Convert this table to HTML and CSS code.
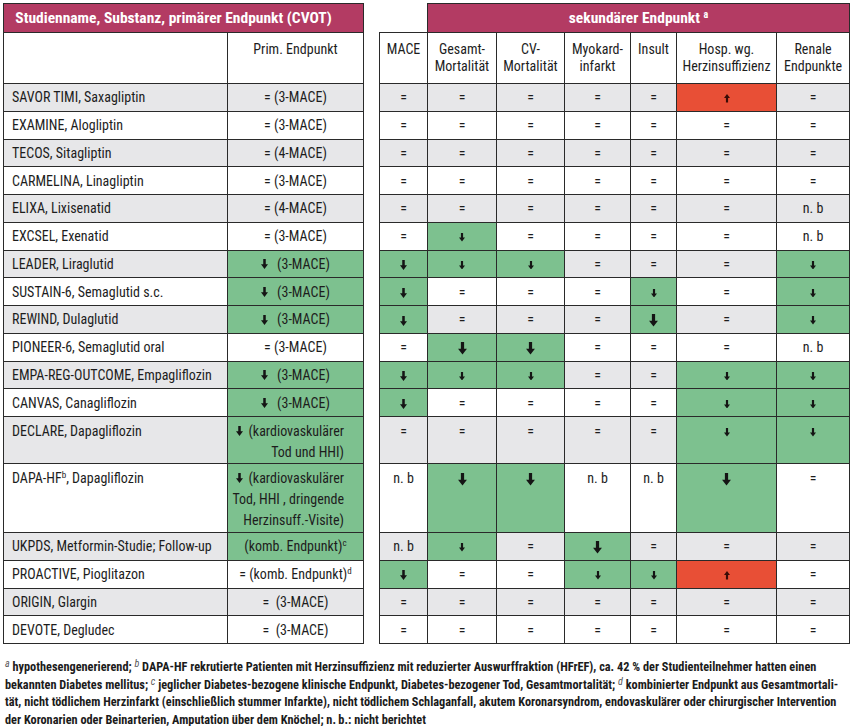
FILE: index.html
```html
<!DOCTYPE html>
<html lang="de">
<head>
<meta charset="utf-8">
<link rel="stylesheet" href="styles.css">
</head>
<body>
<div class="page">
<div class="tables">
<table class="tbl left">
<colgroup><col class="c-name"><col class="c-prim"></colgroup>
<tr class="h1"><th colspan="2" class="mag mag-l">Studienname, Substanz, primärer Endpunkt (CVOT)</th></tr>
<tr class="h2"><th class="hd"></th><th class="hd">Prim. Endpunkt</th></tr>
<tr class="r g"><td class="name">SAVOR TIMI, Saxagliptin</td><td>= (3-MACE)</td></tr>
<tr class="r"><td class="name">EXAMINE, Alogliptin</td><td>= (3-MACE)</td></tr>
<tr class="r g"><td class="name">TECOS, Sitagliptin</td><td>= (4-MACE)</td></tr>
<tr class="r"><td class="name">CARMELINA, Linagliptin</td><td>= (3-MACE)</td></tr>
<tr class="r g"><td class="name">ELIXA, Lixisenatid</td><td>= (4-MACE)</td></tr>
<tr class="r"><td class="name">EXCSEL, Exenatid</td><td>= (3-MACE)</td></tr>
<tr class="r g"><td class="name">LEADER, Liraglutid</td><td class="gr"><svg class="ar m pa" viewBox="0 0 10 14"><path d="M3.2 0h3.6v7.5H10L5 14 0 7.5h3.2z"/></svg>(3-MACE)</td></tr>
<tr class="r"><td class="name">SUSTAIN-6, Semaglutid s.c.</td><td class="gr"><svg class="ar m pa" viewBox="0 0 10 14"><path d="M3.2 0h3.6v7.5H10L5 14 0 7.5h3.2z"/></svg>(3-MACE)</td></tr>
<tr class="r g"><td class="name">REWIND, Dulaglutid</td><td class="gr"><svg class="ar m pa" viewBox="0 0 10 14"><path d="M3.2 0h3.6v7.5H10L5 14 0 7.5h3.2z"/></svg>(3-MACE)</td></tr>
<tr class="r"><td class="name">PIONEER-6, Semaglutid oral</td><td>= (3-MACE)</td></tr>
<tr class="r g"><td class="name">EMPA-REG-OUTCOME, Empagliflozin</td><td class="gr"><svg class="ar m pa" viewBox="0 0 10 14"><path d="M3.2 0h3.6v7.5H10L5 14 0 7.5h3.2z"/></svg>(3-MACE)</td></tr>
<tr class="r"><td class="name">CANVAS, Canagliflozin</td><td class="gr"><svg class="ar m pa" viewBox="0 0 10 14"><path d="M3.2 0h3.6v7.5H10L5 14 0 7.5h3.2z"/></svg>(3-MACE)</td></tr>
<tr class="r2 g tall"><td class="name">DECLARE, Dapagliflozin</td><td class="gr multi"><svg class="ar m pb" viewBox="0 0 10 14"><path d="M3.2 0h3.6v7.5H10L5 14 0 7.5h3.2z"/></svg>(kardiovaskulärer<br>Tod und HHI)</td></tr>
<tr class="r3 tall"><td class="name">DAPA-HF<sup class="sp">b</sup>, Dapagliflozin</td><td class="gr multi"><svg class="ar m pb" viewBox="0 0 10 14"><path d="M3.2 0h3.6v7.5H10L5 14 0 7.5h3.2z"/></svg>(kardiovaskulärer<br>Tod, HHI , dringende<br>Herzinsuff.-Visite)</td></tr>
<tr class="r g"><td class="name">UKPDS, Metformin-Studie; Follow-up</td><td class="gr">(komb. Endpunkt)<sup class="sp">c</sup></td></tr>
<tr class="r"><td class="name">PROACTIVE, Pioglitazon</td><td>= (komb. Endpunkt)<sup class="sp">d</sup></td></tr>
<tr class="r g"><td class="name">ORIGIN, Glargin</td><td>=&nbsp; (3-MACE)</td></tr>
<tr class="r"><td class="name">DEVOTE, Degludec</td><td>=&nbsp; (3-MACE)</td></tr>
</table>

<table class="tbl right">
<colgroup><col class="c1"><col class="c2"><col class="c3"><col class="c4"><col class="c5"><col class="c6"><col class="c7"></colgroup>
<tr class="h1"><td class="blank"></td><th colspan="6" class="mag">sekundärer Endpunkt <sup class="hsup">a</sup></th></tr>
<tr class="h2"><th class="hd">MACE</th><th class="hd">Gesamt-<br>Mortalität</th><th class="hd">CV-<br>Mortalität</th><th class="hd">Myokard-<br>infarkt</th><th class="hd">Insult</th><th class="hd">Hosp. wg.<br>Herzinsuffizienz</th><th class="hd">Renale<br>Endpunkte</th></tr>
<tr class="r g"><td>=</td><td>=</td><td>=</td><td>=</td><td>=</td><td class="rd"><svg class="ar s up" viewBox="0 0 10 14"><path d="M3.2 14h3.6V6.5H10L5 0 0 6.5h3.2z"/></svg></td><td>=</td></tr>
<tr class="r"><td>=</td><td>=</td><td>=</td><td>=</td><td>=</td><td>=</td><td>=</td></tr>
<tr class="r g"><td>=</td><td>=</td><td>=</td><td>=</td><td>=</td><td>=</td><td>=</td></tr>
<tr class="r"><td>=</td><td>=</td><td>=</td><td>=</td><td>=</td><td>=</td><td>=</td></tr>
<tr class="r g"><td>=</td><td>=</td><td>=</td><td>=</td><td>=</td><td>=</td><td class="nb">n. b</td></tr>
<tr class="r"><td>=</td><td class="gr"><svg class="ar s" viewBox="0 0 10 14"><path d="M3.2 0h3.6v7.5H10L5 14 0 7.5h3.2z"/></svg></td><td>=</td><td>=</td><td>=</td><td>=</td><td class="nb">n. b</td></tr>
<tr class="r g"><td class="gr"><svg class="ar m" viewBox="0 0 10 14"><path d="M3.2 0h3.6v7.5H10L5 14 0 7.5h3.2z"/></svg></td><td class="gr"><svg class="ar s" viewBox="0 0 10 14"><path d="M3.2 0h3.6v7.5H10L5 14 0 7.5h3.2z"/></svg></td><td class="gr"><svg class="ar s" viewBox="0 0 10 14"><path d="M3.2 0h3.6v7.5H10L5 14 0 7.5h3.2z"/></svg></td><td>=</td><td>=</td><td>=</td><td class="gr"><svg class="ar s" viewBox="0 0 10 14"><path d="M3.2 0h3.6v7.5H10L5 14 0 7.5h3.2z"/></svg></td></tr>
<tr class="r"><td class="gr"><svg class="ar m" viewBox="0 0 10 14"><path d="M3.2 0h3.6v7.5H10L5 14 0 7.5h3.2z"/></svg></td><td>=</td><td>=</td><td>=</td><td class="gr"><svg class="ar s" viewBox="0 0 10 14"><path d="M3.2 0h3.6v7.5H10L5 14 0 7.5h3.2z"/></svg></td><td>=</td><td class="gr"><svg class="ar s" viewBox="0 0 10 14"><path d="M3.2 0h3.6v7.5H10L5 14 0 7.5h3.2z"/></svg></td></tr>
<tr class="r g"><td class="gr"><svg class="ar m" viewBox="0 0 10 14"><path d="M3.2 0h3.6v7.5H10L5 14 0 7.5h3.2z"/></svg></td><td>=</td><td>=</td><td>=</td><td class="gr"><svg class="ar l" viewBox="0 0 10 14"><path d="M3.2 0h3.6v7.5H10L5 14 0 7.5h3.2z"/></svg></td><td>=</td><td class="gr"><svg class="ar s" viewBox="0 0 10 14"><path d="M3.2 0h3.6v7.5H10L5 14 0 7.5h3.2z"/></svg></td></tr>
<tr class="r"><td>=</td><td class="gr"><svg class="ar l" viewBox="0 0 10 14"><path d="M3.2 0h3.6v7.5H10L5 14 0 7.5h3.2z"/></svg></td><td class="gr"><svg class="ar l" viewBox="0 0 10 14"><path d="M3.2 0h3.6v7.5H10L5 14 0 7.5h3.2z"/></svg></td><td>=</td><td>=</td><td>=</td><td class="nb">n. b</td></tr>
<tr class="r g"><td class="gr"><svg class="ar m" viewBox="0 0 10 14"><path d="M3.2 0h3.6v7.5H10L5 14 0 7.5h3.2z"/></svg></td><td class="gr"><svg class="ar s" viewBox="0 0 10 14"><path d="M3.2 0h3.6v7.5H10L5 14 0 7.5h3.2z"/></svg></td><td class="gr"><svg class="ar s" viewBox="0 0 10 14"><path d="M3.2 0h3.6v7.5H10L5 14 0 7.5h3.2z"/></svg></td><td>=</td><td>=</td><td class="gr"><svg class="ar s" viewBox="0 0 10 14"><path d="M3.2 0h3.6v7.5H10L5 14 0 7.5h3.2z"/></svg></td><td class="gr"><svg class="ar s" viewBox="0 0 10 14"><path d="M3.2 0h3.6v7.5H10L5 14 0 7.5h3.2z"/></svg></td></tr>
<tr class="r"><td class="gr"><svg class="ar m" viewBox="0 0 10 14"><path d="M3.2 0h3.6v7.5H10L5 14 0 7.5h3.2z"/></svg></td><td>=</td><td>=</td><td>=</td><td>=</td><td class="gr"><svg class="ar s" viewBox="0 0 10 14"><path d="M3.2 0h3.6v7.5H10L5 14 0 7.5h3.2z"/></svg></td><td class="gr"><svg class="ar s" viewBox="0 0 10 14"><path d="M3.2 0h3.6v7.5H10L5 14 0 7.5h3.2z"/></svg></td></tr>
<tr class="r2 g tall"><td>=</td><td>=</td><td>=</td><td>=</td><td>=</td><td class="gr"><svg class="ar s" viewBox="0 0 10 14"><path d="M3.2 0h3.6v7.5H10L5 14 0 7.5h3.2z"/></svg></td><td class="gr"><svg class="ar s" viewBox="0 0 10 14"><path d="M3.2 0h3.6v7.5H10L5 14 0 7.5h3.2z"/></svg></td></tr>
<tr class="r3 tall"><td class="nb">n. b</td><td class="gr"><svg class="ar l" viewBox="0 0 10 14"><path d="M3.2 0h3.6v7.5H10L5 14 0 7.5h3.2z"/></svg></td><td class="gr"><svg class="ar l" viewBox="0 0 10 14"><path d="M3.2 0h3.6v7.5H10L5 14 0 7.5h3.2z"/></svg></td><td class="nb">n. b</td><td class="nb">n. b</td><td class="gr"><svg class="ar l" viewBox="0 0 10 14"><path d="M3.2 0h3.6v7.5H10L5 14 0 7.5h3.2z"/></svg></td><td>=</td></tr>
<tr class="r g"><td class="nb">n. b</td><td class="gr"><svg class="ar s" viewBox="0 0 10 14"><path d="M3.2 0h3.6v7.5H10L5 14 0 7.5h3.2z"/></svg></td><td>=</td><td class="gr"><svg class="ar l" viewBox="0 0 10 14"><path d="M3.2 0h3.6v7.5H10L5 14 0 7.5h3.2z"/></svg></td><td>=</td><td>=</td><td>=</td></tr>
<tr class="r"><td class="gr"><svg class="ar m" viewBox="0 0 10 14"><path d="M3.2 0h3.6v7.5H10L5 14 0 7.5h3.2z"/></svg></td><td>=</td><td>=</td><td class="gr"><svg class="ar s" viewBox="0 0 10 14"><path d="M3.2 0h3.6v7.5H10L5 14 0 7.5h3.2z"/></svg></td><td class="gr"><svg class="ar s" viewBox="0 0 10 14"><path d="M3.2 0h3.6v7.5H10L5 14 0 7.5h3.2z"/></svg></td><td class="rd"><svg class="ar s up" viewBox="0 0 10 14"><path d="M3.2 14h3.6V6.5H10L5 0 0 6.5h3.2z"/></svg></td><td>=</td></tr>
<tr class="r g"><td>=</td><td>=</td><td>=</td><td>=</td><td>=</td><td>=</td><td>=</td></tr>
<tr class="r"><td>=</td><td>=</td><td>=</td><td>=</td><td>=</td><td>=</td><td>=</td></tr>
</table>
</div>

<p class="foot"><sup class="fs">a</sup> hypothesengenerierend; <sup class="fs">b</sup> DAPA-HF rekrutierte Patienten mit Herzinsuffizienz mit reduzierter Auswurffraktion (HFrEF), ca. 42&nbsp;% der Studienteilnehmer hatten einen<br>bekannten Diabetes mellitus; <sup class="fs">c</sup> jeglicher Diabetes-bezogene klinische Endpunkt, Diabetes-bezogener Tod, Gesamtmortalität; <sup class="fs">d</sup> kombinierter Endpunkt aus Gesamtmortali-<br>tät, nicht tödlichem Herzinfarkt (einschließlich stummer Infarkte), nicht tödlichem Schlaganfall, akutem Koronarsyndrom, endovaskulärer oder chirurgischer Intervention<br>der Koronarien oder Beinarterien, Amputation über dem Knöchel; n.&#8201;b.: nicht berichtet</p>
</div>
</body>
</html>
```

FILE: styles.css
```css
* { box-sizing: border-box; }
body {
  margin: 0;
  background: #fff;
  color: #1d1d1d;
  font-family: "Liberation Sans Narrow", "Roboto Condensed", "DejaVu Sans Condensed", Roboto, sans-serif;
  font-size: 14px;
}
.page { padding: 3px 0 0 3px; }
.tables { display: flex; gap: 15px; align-items: flex-start; }
.tbl { border-collapse: collapse; table-layout: fixed; }
.tbl td, .tbl th {
  border: 1px solid #2a2a2a;
  padding: 0;
  text-align: center;
  vertical-align: middle;
  font-weight: normal;
  line-height: 20px;
  background: #fff;
}
.left { width: 360px; }
.c-name { width: 224px; }
.c-prim { width: 136px; }
.right { width: 470px; }
.c1 { width: 48px; } .c2 { width: 69px; } .c3 { width: 68px; } .c4 { width: 66px; }
.c5 { width: 46px; } .c6 { width: 100px; } .c7 { width: 73px; }

.h1 { height: 29px; }
.h2 { height: 51px; }
.r { height: 27.75px; }
.r2 { height: 47px; }
.r3 { height: 69px; }

.tbl th.mag {
  background: #b33b63;
  color: #fff;
  font-weight: bold;
  font-size: 15.5px;
}
.tbl th.mag-l { padding-right: 20px; }
.hsup { font-size: 10px; vertical-align: 5px; line-height: 0; }
.tbl td.blank { border-top: none; border-left: none; border-right: none; background: #fff; }
.tbl th.hd {
  vertical-align: top;
  line-height: 17px;
  padding-top: 8px;
}
.tbl td.name { text-align: left; padding-left: 8px; }
.tbl tr.g td { background: #e7e7e9; }
.tbl tr td.gr { background: #7dc18f; }
.tbl tr td.rd { background: #e84f36; }
.tbl tr.tall td { vertical-align: top; padding-top: 4px; line-height: 21px; }
.tbl tr.tall td.multi { text-align: right; padding-right: 19px; }
.tbl td.nb { letter-spacing: 0; }
.sp { font-size: 9px; vertical-align: 5px; line-height: 0; }

.ar { display: inline-block; vertical-align: middle; fill: #151515; }
.ar.s { width: 6px; height: 8.5px; }
.ar.m { width: 7px; height: 10px; }
.ar.l { width: 9px; height: 12.5px; }
.ar.up { fill: #3a0c06; }
.pa { margin-right: 9px; margin-top: -2px; }
.pb { margin-right: 5px; margin-top: -2px; }

.foot {
  margin: 15px 0 0 2px;
  font-weight: bold;
  font-size: 12.3px;
  line-height: 17.7px;
  color: #1b1b1b;
}
.fs { font-style: italic; font-weight: normal; color: #555; font-size: 10px; vertical-align: 4px; line-height: 0; }
```
